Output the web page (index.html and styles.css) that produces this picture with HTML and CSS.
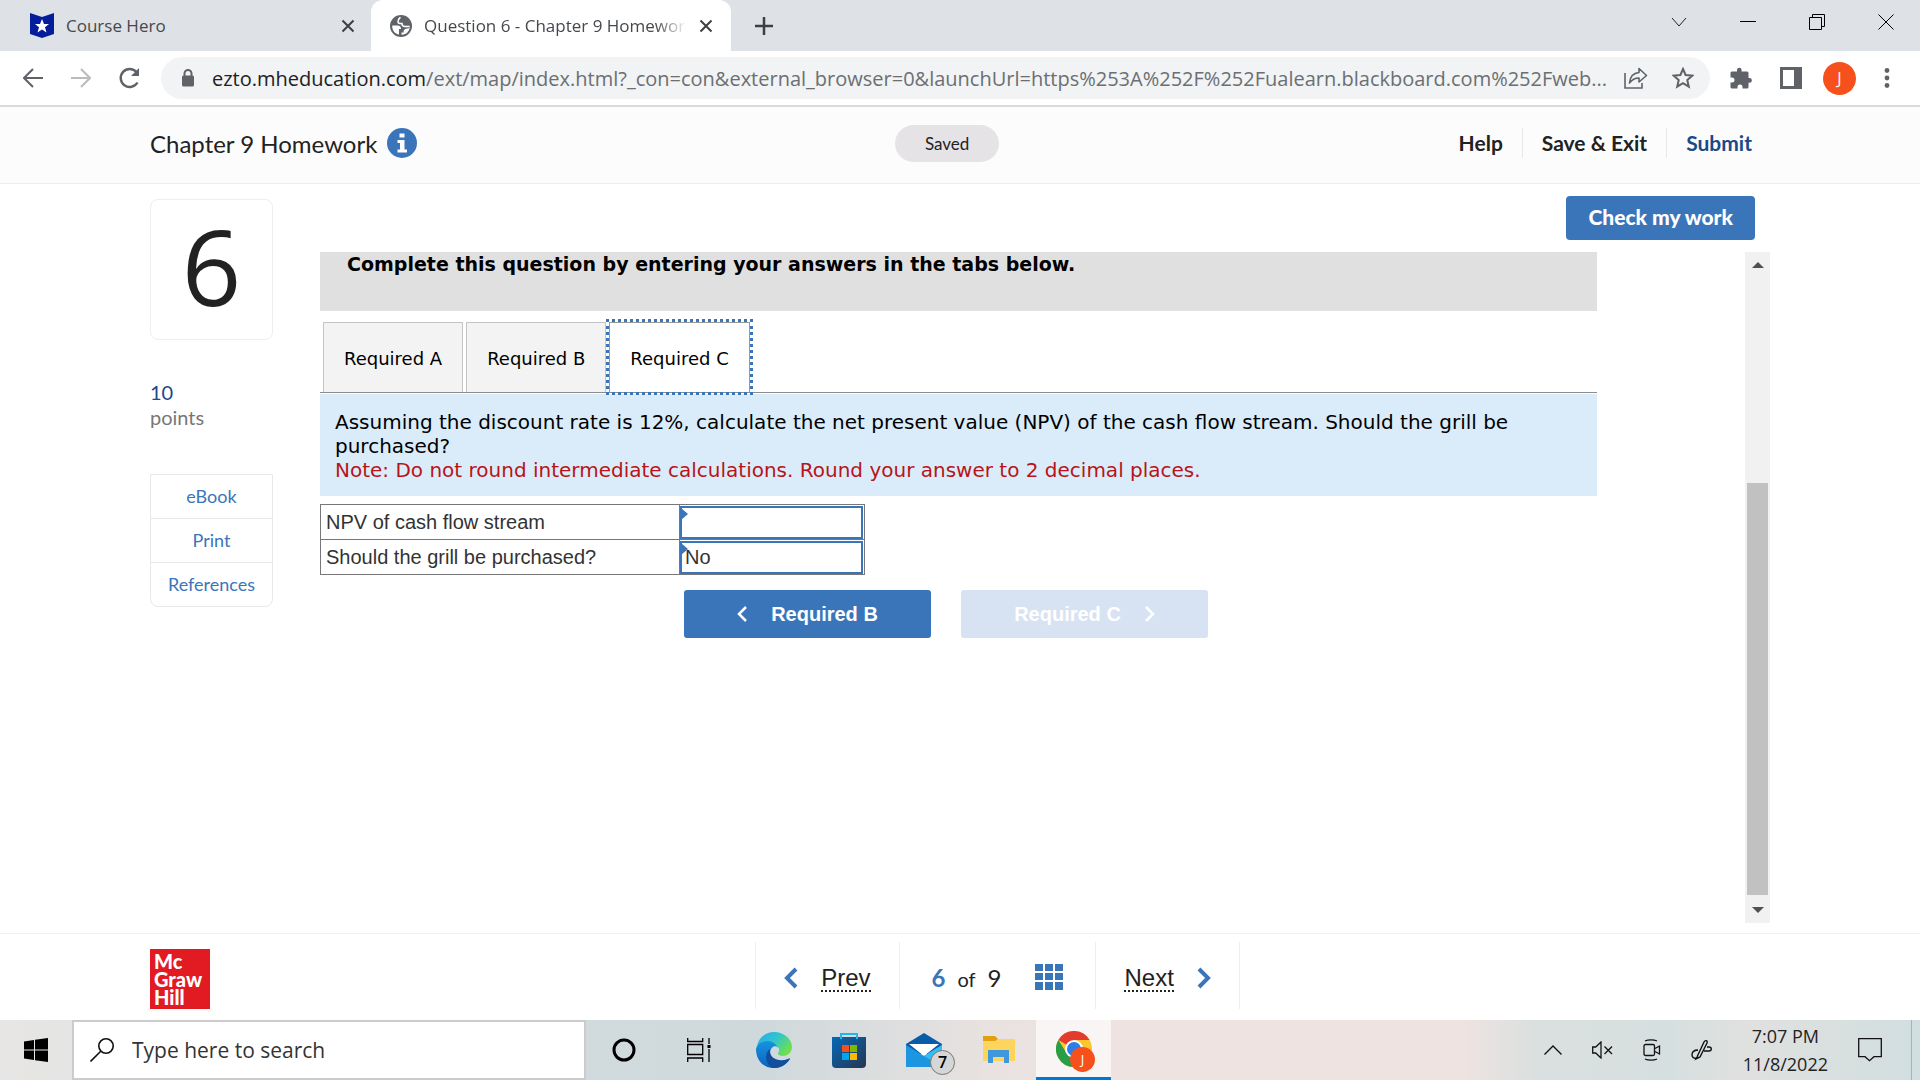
FILE: index.html
```html
<!DOCTYPE html>
<html lang="en">
<head>
    <meta charset="UTF-8">
    <meta name="viewport" content="width=device-width, initial-scale=1.0">
    <title>Question 6 - Chapter 9 Homework</title>
    <link rel="stylesheet" href="styles.css">
</head>
<body>
    <!-- browser tabs -->
    <div class="tab-strip">
        <div class="browser-tab">
            <svg width="24" height="26" viewBox="0 0 24 26"><path d="M0 0l12 4L24 0v21l-12 4-12-4z" fill="#051d9b"/><path d="M12 6l2 5h5l-4 3.200 1.500 5.300L12 16.500l-4.500 3L9 14.200 5 11h5z" fill="#fff"/></svg>
            <span class="browser-tab-title">Course Hero</span>
            <button class="icon-btn" aria-label="Close tab"><svg width="14" height="14" viewBox="0 0 14 14"><path d="M1.500 1.500l11 11M12.500 1.500l-11 11" stroke="#3c4043" stroke-width="2"/></svg></button>
        </div>
        <div class="browser-tab active">
            <svg width="22" height="22" viewBox="0 0 22 22"><circle cx="11" cy="11" r="11" fill="#5f6368"/><path d="M2.200 10.500h5.300c2.500 0 3.500 1.500 3.500 3.500h-2v5.500C5 19 2 15.500 2.200 10.500z" fill="#fff"/><path d="M11.500 19.700v-2.200h2c0-3 1.500-4 4-4 1 0 2-.5 2.300-1.500-.3 4.500-4 8-8.300 7.700z" fill="#fff"/><path d="M10.500 2.200c-1 1-2.500 2-2.500 4.300 0 1.500 1 2 2 2h2c0 2 1 3 3 3h4.700" fill="none" stroke="#fff" stroke-width="1.500"/></svg>
            <span class="browser-tab-title fade">Question 6 - Chapter 9 Homework</span>
            <button class="icon-btn" aria-label="Close tab"><svg width="14" height="14" viewBox="0 0 14 14"><path d="M1.500 1.500l11 11M12.500 1.500l-11 11" stroke="#3c4043" stroke-width="2"/></svg></button>
        </div>
        <button class="icon-btn new-tab" aria-label="New tab"><svg width="18" height="18" viewBox="0 0 18 18"><path d="M9 0v18M0 9h18" stroke="#3c4043" stroke-width="2.500"/></svg></button>
        <div class="window-controls">
            <button class="icon-btn" aria-label="Search tabs"><svg width="16" height="16" viewBox="0 0 16 16"><path d="M1 4l7 8 7-8" fill="none" stroke="#222"/></svg></button>
            <button class="icon-btn" aria-label="Minimize"><svg width="16" height="16" viewBox="0 0 16 16"><path d="M0 7.500h16" stroke="#000"/></svg></button>
            <button class="icon-btn" aria-label="Restore"><svg width="16" height="16" viewBox="0 0 16 16"><path d="M.5 3.500h12v12H.5zM3.500 3.500v-3h12v12h-3" fill="none" stroke="#000"/></svg></button>
            <button class="icon-btn" aria-label="Close"><svg width="16" height="16" viewBox="0 0 16 16"><path d="M.5.5l15 15M15.500.5l-15 15" stroke="#000"/></svg></button>
        </div>
    </div>

    <!-- address bar -->
    <div class="toolbar">
        <button class="icon-btn" aria-label="Back"><svg width="20" height="20" viewBox="0 0 20 20"><path d="M20 10H2M10 1l-9 9 9 9" fill="none" stroke="#5f6368" stroke-width="2"/></svg></button>
        <button class="icon-btn" aria-label="Forward"><svg width="20" height="20" viewBox="0 0 20 20"><path d="M0 10h18M10 1l9 9-9 9" fill="none" stroke="#b9bbbe" stroke-width="2"/></svg></button>
        <button class="icon-btn" aria-label="Reload"><svg width="22" height="22" viewBox="0 0 22 22"><path d="M18.500 15.500A9 9 0 1 1 17.500 5" fill="none" stroke="#5f6368" stroke-width="2.400"/><path d="M20 1v8h-8z" fill="#5f6368"/></svg></button>
        <div class="address">
            <svg width="14" height="18" viewBox="0 0 14 18"><path d="M3.500 8V4.500a3.500 3.500 0 0 1 7 0V8" fill="none" stroke="#5f6368" stroke-width="2"/><rect x="1" y="6.500" width="12" height="11" rx="1.500" fill="#5f6368"/></svg>
            <span class="url"><span class="host">ezto.mheducation.com</span>/ext/map/index.html?_con=con&amp;external_browser=0&amp;launchUrl=https%253A%252F%252Fualearn.blackboard.com%252Fweb...</span>
            <button class="icon-btn" aria-label="Share"><svg width="24" height="22" viewBox="0 0 24 22"><path d="M1 6v15h17v-5" fill="none" stroke="#5f6368" stroke-width="1.600"/><path d="M5.500 16C6 9.500 9.500 6 15 5.500V1.500l7.500 7-7.500 6.500v-4c-4 0-7 1.500-9.500 5z" fill="none" stroke="#5f6368" stroke-width="1.600" stroke-linejoin="round"/></svg></button>
            <button class="icon-btn bookmark" aria-label="Bookmark"><svg width="22" height="22" viewBox="0 0 22 22"><path d="M11 2l2.600 6 6.700.600-5 4.500 1.500 6.600L11 16.200l-5.800 3.500 1.500-6.600-5-4.500L8.400 8z" fill="none" stroke="#5f6368" stroke-width="2"/></svg></button>
        </div>
        <button class="icon-btn" aria-label="Extensions"><svg width="22" height="22" viewBox="0 0 22 22"><path d="M1.500 4.500H7V3a2.300 2.300 0 0 1 4.600 0v1.500H17a1.500 1.500 0 0 1 1.500 1.500v5h1a2.400 2.400 0 0 1 0 4.800h-1V20a1.500 1.500 0 0 1-1.500 1.500h-4.500V20a2.500 2.500 0 0 0-5 0v1.500H2A1.500 1.500 0 0 1 .5 20v-4.500H2a2.500 2.500 0 0 0 0-5H.5v-5z" fill="#5f6368"/></svg></button>
        <button class="icon-btn" aria-label="Side panel"><svg width="22" height="22" viewBox="0 0 22 22"><path d="M0 0h22v22H0zM3 3v16h11V3z" fill="#5f6368" fill-rule="evenodd"/></svg></button>
        <button class="avatar" aria-label="Profile">J</button>
        <button class="icon-btn" aria-label="Menu"><svg width="6" height="20" viewBox="0 0 6 20"><g fill="#5f6368"><circle cx="3" cy="2.500" r="2.400"/><circle cx="3" cy="10" r="2.400"/><circle cx="3" cy="17.500" r="2.400"/></g></svg></button>
    </div>

    <header class="page-header">
        <div class="assignment">
            <span>Chapter 9 Homework</span>
            <button class="icon-btn" aria-label="Assignment info"><svg width="30" height="30" viewBox="0 0 30 30"><circle cx="15" cy="15" r="15" fill="#3a75ba"/><path d="M12.500 5.500h5v4h-5zM10.500 12h7v9.500h2.500v3h-9.500v-3H13V15h-2.500z" fill="#fff"/></svg></button>
        </div>
        <span class="saved">Saved</span>
        <nav class="header-nav">
            <a href="#help">Help</a>
            <a href="#exit">Save &amp; Exit</a>
            <a href="#submit" class="submit">Submit</a>
        </nav>
    </header>

    <div class="workspace">
        <aside class="sidebar">
            <div class="question-number">6</div>
            <div class="points"><span>10</span><br>points</div>
            <div class="tools">
                <a href="#ebook">eBook</a>
                <a href="#print">Print</a>
                <a href="#references">References</a>
            </div>
        </aside>

        <main class="main">
            <button class="check-btn">Check my work</button>
            <div class="frame">
                <div class="question">
                    <div class="instruction">Complete this question by entering your answers in the tabs below.</div>
                    <div class="tabs" role="tablist">
                        <button class="tab" role="tab">Required A</button>
                        <button class="tab" role="tab">Required B</button>
                        <button class="tab selected" role="tab" aria-selected="true">Required C</button>
                    </div>
                    <div class="prompt">
                        Assuming the discount rate is 12%, calculate the net present value (NPV) of the cash flow stream. Should the grill be purchased?
                        <div class="note">Note: Do not round intermediate calculations. Round your answer to 2 decimal places.</div>
                    </div>
                    <table class="answers">
                        <tr>
                            <th scope="row"><label for="npv">NPV of cash flow stream</label></th>
                            <td><input id="npv" type="text"></td>
                        </tr>
                        <tr>
                            <th scope="row"><label for="grill">Should the grill be purchased?</label></th>
                            <td><input id="grill" type="text" value="No"></td>
                        </tr>
                    </table>
                    <div class="step-buttons">
                        <button class="step">
                            <svg width="10" height="16" viewBox="0 0 10 16"><path d="M9 1L2 8l7 7" fill="none" stroke="#fff" stroke-width="2.500"/></svg>
                            Required B
                        </button>
                        <button class="step" disabled>
                            Required C
                            <svg width="10" height="16" viewBox="0 0 10 16"><path d="M1 1l7 7-7 7" fill="none" stroke="#fff" stroke-width="2.500"/></svg>
                        </button>
                    </div>
                </div>
                <div class="scrollbar">
                    <svg width="12" height="6" viewBox="0 0 12 6"><path d="M0 6l6-6 6 6z" fill="#505050"/></svg>
                    <div class="track"><div class="thumb"></div></div>
                    <svg width="12" height="6" viewBox="0 0 12 6"><path d="M0 0l6 6 6-6z" fill="#505050"/></svg>
                </div>
            </div>
        </main>
    </div>

    <footer class="page-footer">
        <div class="logo">Mc<br>Graw<br>Hill</div>
        <div class="pager">
            <a class="pager-cell" href="#prev">
                <svg width="14" height="22" viewBox="0 0 14 22"><path d="M12 2l-9 9 9 9" fill="none" stroke="#3a75ba" stroke-width="4"/></svg>
                <span class="pager-label">Prev</span>
            </a>
            <div class="pager-cell count">
                <span><b>6</b> <small>of</small> 9</span>
                <button class="icon-btn" aria-label="Question list"><svg width="28" height="26" viewBox="0 0 28 26"><path d="M0 0h8v7H0zM10 0h8v7h-8zM20 0h8v7h-8zM0 9h8v7H0zM10 9h8v7h-8zM20 9h8v7h-8zM0 18h8v8H0zM10 18h8v8h-8zM20 18h8v8h-8z" fill="#3a75ba"/></svg></button>
            </div>
            <a class="pager-cell" href="#next">
                <span class="pager-label">Next</span>
                <svg width="14" height="22" viewBox="0 0 14 22"><path d="M2 2l9 9-9 9" fill="none" stroke="#3a75ba" stroke-width="4"/></svg>
            </a>
        </div>
    </footer>

    <!-- windows taskbar -->
    <div class="taskbar">
        <button class="task start" aria-label="Start"><svg width="24" height="24" viewBox="0 0 24 24"><path d="M0 3.500l10-1.500v9.500H0zM11 1.800L24 0v11.500H11zM0 12.500h10V22L0 20.500zM11 12.500h13V24l-13-1.800z"/></svg></button>
        <label class="search">
            <svg width="24" height="24" viewBox="0 0 24 24"><circle cx="16" cy="8" r="7.200" fill="none" stroke="#111" stroke-width="1.600"/><path d="M11 13L.5 23.500" stroke="#111" stroke-width="1.600"/></svg>
            <input type="text" placeholder="Type here to search">
        </label>
        <button class="task" aria-label="Cortana"><svg width="24" height="24" viewBox="0 0 24 24"><circle cx="12" cy="12" r="10" fill="none" stroke="#000" stroke-width="3"/></svg></button>
        <button class="task" aria-label="Task view"><svg width="24" height="24" viewBox="0 0 24 24"><path d="M.7 0v3.500h15V0M.7 6.500h15v10H.7zM.7 24v-4h15v4M22 0v6M22 11v13" fill="none" stroke="#000" stroke-width="1.300"/><path d="M20.500 7h3v3h-3z"/></svg></button>
        <button class="task" aria-label="Edge">
            <svg width="36" height="36" viewBox="0 0 36 36">
                <defs>
                    <linearGradient id="edgeTop" x1="0" y1="0" x2="1" y2=".6"><stop offset="0" stop-color="#2ba9e8"/><stop offset=".5" stop-color="#2fc4d0"/><stop offset="1" stop-color="#6fe04c"/></linearGradient>
                    <linearGradient id="edgeLow" x1="0" y1="0" x2="0" y2="1"><stop offset="0" stop-color="#1593e0"/><stop offset="1" stop-color="#0c63c0"/></linearGradient>
                </defs>
                <path d="M1 14C3 5 10 0 18 0c10 0 18 7 18 15 0 6-5 9-9 9-4 0-6-2-5-3 2-2 2-7-4-8-6-2-14-2-17 1z" fill="url(#edgeTop)"/>
                <path d="M0 17c1-5 6-8 12-8 5 0 9 4 10 7-2-3-7-2-8 4-1 7 6 12 13 9 3-1 5-2 6-1-3 5-9 8-15 8C7 36 0 28 0 17z" fill="url(#edgeLow)"/>
                <path d="M14 17c-6 4-5 14 2 19 7 1 14-3 18-9 0-1-1-1-2 0-8 3-19 1-18-10z" fill="#114f9c"/>
            </svg>
        </button>
        <button class="task" aria-label="Microsoft Store">
            <svg width="36" height="36" viewBox="0 0 36 36">
                <defs><linearGradient id="store" x1="0" y1="0" x2="1" y2="1"><stop offset="0" stop-color="#0569b8"/><stop offset="1" stop-color="#283450"/></linearGradient></defs>
                <path d="M1 5h34v27a4 4 0 0 1-4 4H5a4 4 0 0 1-4-4z" fill="url(#store)"/>
                <path d="M10 7V2h16v5" fill="none" stroke="#27b3f2" stroke-width="2"/>
                <path d="M11 13h7v7h-7z" fill="#f25022"/><path d="M19 13h7v7h-7z" fill="#7fba00"/><path d="M11 21h7v7h-7z" fill="#00a4ef"/><path d="M19 21h7v7h-7z" fill="#ffb900"/>
            </svg>
        </button>
        <button class="task" aria-label="Mail">
            <svg width="36" height="34" viewBox="0 0 36 34"><path d="M0 11L18 0l18 11v10H0z" fill="#0a5ba8"/><path d="M3 11h30L18 23z" fill="#fff"/><path d="M0 12l18 11 18-11v22H0z" fill="#1c96e0"/><path d="M36 12L18 23l18 11z" fill="#35bdf1"/></svg>
            <span class="badge">7</span>
        </button>
        <button class="task" aria-label="File Explorer"><svg width="32" height="28" viewBox="0 0 32 28"><path d="M0 0h12l3 3v5H0z" fill="#e0a010"/><path d="M0 5h12l3-2h17v22H0z" fill="#fdd45c"/><path d="M5 27V14h21v13h-5v-6H10v6z" fill="#3f97dc"/></svg></button>
        <button class="task running" aria-label="Chrome">
            <svg width="36" height="36" viewBox="0 0 36 36"><circle cx="18" cy="18" r="18" fill="#fbc52d"/><path d="M18 18L2.400 9A18 18 0 0 1 33.600 9H18z" fill="#e33b2e"/><path d="M2.400 9A18 18 0 0 0 18 36l7.800-13.500h-15z" fill="#2a9d48"/><circle cx="18" cy="18" r="9" fill="#fff"/><circle cx="18" cy="18" r="7" fill="#2f7de9"/></svg>
            <span class="badge profile">J</span>
        </button>
        <div class="tray">
            <button class="icon-btn" aria-label="Show hidden icons"><svg width="18" height="10" viewBox="0 0 18 10"><path d="M.5 9.500L9 1l8.500 8.500" fill="none" stroke="#111" stroke-width="1.400"/></svg></button>
            <button class="icon-btn" aria-label="Volume muted"><svg width="21" height="18" viewBox="0 0 21 18"><path d="M.7 6v6h3L9 17V1L3.700 6zM12.500 5.500l7.500 7.500M20 5.500L12.500 13" fill="none" stroke="#111" stroke-width="1.300"/></svg></button>
            <button class="icon-btn" aria-label="Meet now"><svg width="18" height="22" viewBox="0 0 18 22"><rect x="1" y="5.500" width="10.500" height="11" rx="1.500" fill="none" stroke="#111" stroke-width="1.300"/><path d="M12 9.500L16.500 7v8L12 12.500M2 2c3-1.500 9-1.500 12 0M2 20c3 1.500 9 1.500 12 0" fill="none" stroke="#111" stroke-width="1.300"/></svg></button>
            <button class="icon-btn" aria-label="Windows Ink"><svg width="22" height="22" viewBox="0 0 22 22"><path d="M6 18L13 3c1-2 4-2 3 1L9 18l-4 2zM7 11c-5 0-6 3-6 5s2 4 5 3M13 12h5c3 0 3-4 0-4h-2" fill="none" stroke="#111" stroke-width="1.400"/></svg></button>
            <div class="clock">7:07 PM<br>11/8/2022</div>
            <button class="icon-btn" aria-label="Notifications"><svg width="24" height="24" viewBox="0 0 24 24"><path d="M.7.7h22.600v18H16l-4.500 4-4.500-4H.7z" fill="none" stroke="#111" stroke-width="1.300"/></svg></button>
        </div>
    </div>
</body>
</html>
```
FILE: styles.css
```css
* {
    box-sizing: border-box;
}
body {
    margin: 0;
    height: 100vh;
    display: flex;
    flex-direction: column;
    background: white;
    color: #222;
    font-family: "Open Sans", sans-serif;
    overflow: hidden;
}
button, input {
    font-family: inherit;
    margin: 0;
}
button {
    cursor: pointer;
}
svg {
    display: block;
    flex-shrink: 0;
}
a {
    text-decoration: none;
}
.icon-btn {
    padding: 0;
    border: none;
    background: none;
    flex-shrink: 0;
}

/* browser */
.tab-strip {
    display: flex;
    align-items: stretch;
    height: 51px;
    flex-shrink: 0;
    background: #dee1e6;
}
.browser-tab {
    display: flex;
    align-items: center;
    gap: 12px;
    width: 371px;
    padding: 0 16px 0 30px;
    font-size: 17px;
    color: #45494d;
}
.browser-tab.active {
    width: 360px;
    padding: 0 18px 0 19px;
    background: white;
    border-radius: 12px 12px 0 0;
}
.browser-tab-title {
    flex: 1;
    white-space: nowrap;
    overflow: hidden;
}
.browser-tab-title.fade {
    mask-image: linear-gradient(to right, #000 88%, transparent);
}
.new-tab {
    margin-left: 24px;
}
.window-controls {
    display: flex;
    gap: 53px;
    margin-left: auto;
    padding: 0 26px 8px 0;
}
.toolbar {
    display: flex;
    align-items: center;
    gap: 28px;
    height: 56px;
    flex-shrink: 0;
    padding: 0 30px 0 23px;
    border-bottom: 2px solid #d9dadc;
}
.address {
    display: flex;
    align-items: center;
    flex: 1;
    min-width: 0;
    height: 42px;
    margin: 0 -8px;
    padding: 0 16px 0 20px;
    border-radius: 21px;
    background: #f1f3f4;
}
.url {
    flex: 1;
    min-width: 0;
    padding: 0 8px 0 17px;
    white-space: nowrap;
    font-size: 20px;
    color: #6b6f73;
}
.host {
    color: #202124;
}
.bookmark {
    margin-left: 24px;
}
.avatar {
    width: 33px;
    height: 33px;
    margin-left: -7px;
    padding: 0;
    border: none;
    border-radius: 50%;
    background: #f6511d;
    color: white;
    font-size: 16px;
}

/* assignment header */
.page-header {
    display: grid;
    grid-template-columns: 46.5% auto 1fr;
    align-items: center;
    height: 77px;
    flex-shrink: 0;
    padding: 0 168px 4px 150px;
    background: #fcfcfc;
    border-bottom: 1px solid #eee;
    font-family: Lato, sans-serif;
}
.assignment {
    display: flex;
    align-items: center;
    gap: 10px;
    font-size: 24px;
}
.saved {
    padding: 0 30px;
    border-radius: 19px;
    background: #e5e3e6;
    font-size: 17px;
    line-height: 37px;
}
.header-nav {
    display: flex;
    justify-content: flex-end;
}
.header-nav a {
    padding: 0 19px;
    border-left: 1px solid #e8e8e8;
    color: #222;
    font-size: 21px;
    font-weight: bold;
    line-height: 30px;
}
.header-nav a:first-child {
    border-left: none;
}
.header-nav .submit {
    padding-right: 0;
    color: #194a8a;
}

/* question area */
.workspace {
    display: flex;
    gap: 47px;
    flex: 1;
    min-height: 0;
    padding: 12px 150px 10px;
}
.sidebar {
    width: 123px;
    flex-shrink: 0;
    padding-top: 3px;
    font-family: Lato, sans-serif;
}
.question-number {
    height: 141px;
    border: 1px solid #eee;
    border-radius: 8px;
    font-family: "Open Sans", sans-serif;
    font-size: 104px;
    line-height: 132px;
    text-align: center;
}
.points {
    margin: 40px 0 44px;
    font-size: 20px;
    line-height: 25px;
    color: #777;
}
.points span {
    color: #194a8a;
}
.tools {
    border: 1px solid #e8e8e8;
    border-radius: 0 0 8px 8px;
}
.tools a {
    display: block;
    color: #3a75ba;
    font-size: 18px;
    line-height: 43px;
    text-align: center;
}
.tools a + a {
    border-top: 1px solid #e8e8e8;
}
.main {
    display: flex;
    flex-direction: column;
    flex: 1;
    min-width: 0;
}
.check-btn {
    align-self: flex-end;
    height: 44px;
    margin: 0 15px 12px 0;
    padding: 0 22px 3px;
    border: none;
    border-radius: 4px;
    background: #3a75ba;
    color: white;
    font-family: Lato, sans-serif;
    font-size: 21px;
    font-weight: 900;
}
.frame {
    display: flex;
    gap: 148px;
    flex: 1;
    min-height: 0;
}
.question {
    flex: 1;
    font-family: "DejaVu Sans", sans-serif;
    color: #000;
}
.instruction {
    height: 59px;
    padding-left: 27px;
    background: #e0e0e0;
    font-size: 19px;
    font-weight: bold;
    line-height: 24px;
}
.tabs {
    display: flex;
    gap: 3px;
    margin-top: 11px;
    padding-left: 3px;
    border-bottom: 1px solid #8c8c8c;
}
.tab {
    height: 70px;
    padding: 2px 20px 0;
    border: 1px solid #c4c4c4;
    border-bottom: none;
    background: #f3f3f3;
    color: #000;
    font-size: 18px;
}
.tab.selected {
    background: white;
    border-color: #999;
    outline: 3px dotted #3a75ba;
}
.prompt {
    margin-top: 1px;
    padding: 16px 60px 14px 15px;
    background: #daecfa;
    font-size: 20px;
    line-height: 24px;
}
.note {
    color: #b81418;
}
.answers {
    margin-top: 8px;
    border-collapse: collapse;
    font-family: "Liberation Sans", sans-serif;
    font-size: 20px;
    color: #333;
}
.answers th, .answers td {
    height: 35px;
    padding: 0;
    border: 1px solid #777;
}
.answers th {
    width: 359px;
    padding-left: 5px;
    font-weight: normal;
    text-align: left;
}
.answers td {
    position: relative;
    width: 185px;
}
/* blue corner marker of an answer cell */
.answers td::before {
    content: "";
    position: absolute;
    top: 3px;
    left: 1px;
    border: solid transparent;
    border-width: 6px 0 6px 7px;
    border-left-color: #3a75ba;
}
.answers input {
    display: block;
    width: 183px;
    height: 33px;
    padding: 0 3px;
    border: 2px solid #3a75ba;
    border-radius: 0;
    background: white;
    color: #333;
    font-size: 20px;
}
.step-buttons {
    display: flex;
    gap: 30px;
    margin: 15px 0 0 364px;
}
.step {
    display: flex;
    align-items: center;
    justify-content: center;
    gap: 24px;
    width: 247px;
    height: 48px;
    border: none;
    border-radius: 3px;
    background: #3a75ba;
    color: white;
    font-family: "Liberation Sans", sans-serif;
    font-size: 20px;
    font-weight: bold;
}
.step:disabled {
    background: #d7e3f2;
}
.scrollbar {
    display: flex;
    flex-direction: column;
    align-items: center;
    width: 25px;
    padding: 10px 0;
    background: #f1f1f1;
}
.track {
    display: flex;
    flex-direction: column;
    justify-content: flex-end;
    flex: 1;
    width: 21px;
    padding: 12px 0;
}
.thumb {
    height: 67%;
    background: #c1c1c1;
}

/* footer */
.page-footer {
    display: grid;
    grid-template-columns: 1fr auto 1fr;
    height: 87px;
    flex-shrink: 0;
    padding: 8px 150px 12px;
    border-top: 1px solid #f0f0f0;
}
.logo {
    width: 60px;
    height: 60px;
    margin-top: 7px;
    padding: 3px 0 0 4px;
    background: #e21b23;
    color: white;
    font-family: Lato, sans-serif;
    font-size: 20px;
    font-weight: 900;
    line-height: 18px;
}
.pager {
    display: flex;
    margin-right: -75px;
    border-right: 1px solid #eee;
    font-family: "Liberation Sans", sans-serif;
}
.pager-cell {
    display: flex;
    align-items: center;
    gap: 23px;
    padding: 5px 28px 0;
    border-left: 1px solid #eee;
    color: #222;
    font-size: 24px;
}
.pager-label {
    border-bottom: 2px dotted #222;
    line-height: 25px;
}
.count {
    gap: 34px;
    padding: 3px 32px 0;
    font-family: Lato, sans-serif;
}
.count span {
    display: flex;
    align-items: baseline;
    gap: 12px;
}
.count b {
    color: #3a75ba;
}
.count small {
    font-size: 20px;
}

/* taskbar */
.taskbar {
    display: flex;
    height: 60px;
    flex-shrink: 0;
    background: linear-gradient(to right, #e7e6e5, #d1dadc 31%, #cfd9dc 40%, #e9e2e0 52%, #efe3e1 60%, #efe3e1 76%, #dae0df 80%, #d6dfdf 87%, #e0e1df 91%, #d1dee0);
}
.task {
    display: flex;
    align-items: center;
    justify-content: center;
    position: relative;
    width: 75px;
    padding: 0;
    border: none;
    background: none;
    flex-shrink: 0;
}
.start {
    width: 72px;
}
.search {
    display: flex;
    align-items: center;
    gap: 18px;
    width: 514px;
    padding: 0 16px;
    border: 2px solid #ccc;
    background: white;
}
.search input {
    flex: 1;
    border: none;
    padding: 0;
    font-size: 21px;
}
.search input::placeholder {
    color: #333;
}
.running {
    background: #f8f5f4;
    border-bottom: 3px solid #0078d7;
}
.badge {
    position: absolute;
    right: 6px;
    bottom: 5px;
    width: 25px;
    height: 25px;
    border: 1px solid #777;
    border-radius: 50%;
    background: #d6d6d6;
    color: #000;
    font-size: 16px;
    font-weight: 600;
    line-height: 23px;
    text-align: center;
}
.badge.profile {
    right: 16px;
    border: none;
    background: #f6511d;
    color: white;
    font-size: 13px;
    font-weight: normal;
    line-height: 25px;
}
.tray {
    display: flex;
    align-items: center;
    gap: 30px;
    margin: 0 8px 0 auto;
    padding-right: 29px;
    border-right: 1px solid #a9b2b4;
}
.clock {
    font-size: 18px;
    line-height: 28px;
    text-align: center;
}
```
